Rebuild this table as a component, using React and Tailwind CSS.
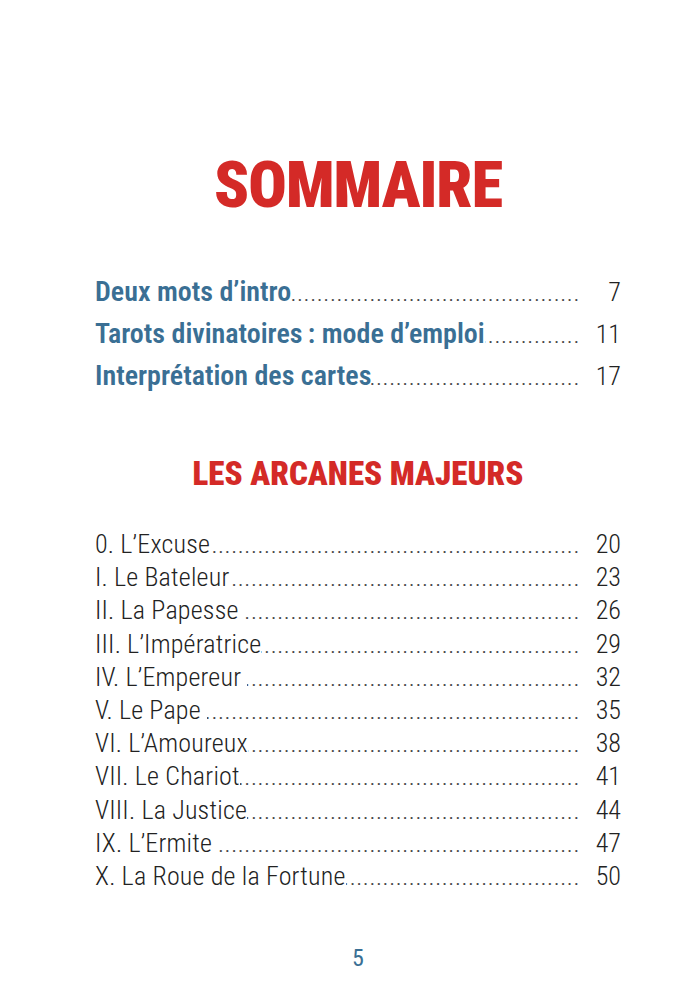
const intro = [
  ['Deux mots d’intro', '7'],
  ['Tarots divinatoires\u2009: mode d’emploi', '11'],
  ['Interprétation des cartes', '17'],
];

const arcanes = [
  ['0. L’Excuse', '20'],
  ['I. Le Bateleur', '23'],
  ['II. La Papesse ', '26'],
  ['III. L’Impératrice', '29'],
  ['IV. L’Empereur ', '32'],
  ['V. Le Pape ', '35'],
  ['VI. L’Amoureux', '38'],
  ['VII. Le Chariot', '41'],
  ['VIII. La Justice', '44'],
  ['IX. L’Ermite ', '47'],
  ['X. La Roue de la Fortune', '50'],
];

const DOTS = '.'.repeat(200);

function Leader() {
  return (
    <span
      dir="rtl"
      className="flex-1 overflow-hidden whitespace-nowrap text-[25px] font-light text-[#444] tracking-[0.6px]"
    >
      {DOTS}
    </span>
  );
}

export default function App() {
  return (
    <div className="w-[700px] h-[999px] bg-white font-['Roboto_Condensed',sans-serif] flex flex-col pt-[154px] pl-[95px] pr-[79px]">
      <h1 className="text-center text-[64px] leading-none font-black tracking-[-1px] text-[#d42a27]">
        SOMMAIRE
      </h1>

      <div className="mt-[53px] flex flex-col">
        {intro.map(([t, n]) => (
          <div key={t} className="flex items-baseline h-[42px] leading-[42px]">
            <span className="whitespace-pre text-[28px] font-semibold text-[#3a6f94]">{t}</span>
            <Leader />
            <span className="w-[41px] text-right text-[26px] font-light text-[#222]">{n}</span>
          </div>
        ))}
      </div>

      <h2 className="mt-[60px] text-center text-[33px] leading-none font-black text-[#d42a27]">
        LES ARCANES MAJEURS
      </h2>

      <div className="mt-[38px] flex flex-col">
        {arcanes.map(([t, n]) => (
          <div key={t} className="flex items-baseline h-[33.2px] leading-[33.2px]">
            <span className="whitespace-pre text-[26px] font-light tracking-[0.2px] text-[#222]">{t}</span>
            <Leader />
            <span className="w-[41px] text-right text-[26px] font-light text-[#222]">{n}</span>
          </div>
        ))}
      </div>

      <div className="mt-[53px] text-center text-[24px] leading-none text-[#3a6f94]">5</div>
    </div>
  );
}
